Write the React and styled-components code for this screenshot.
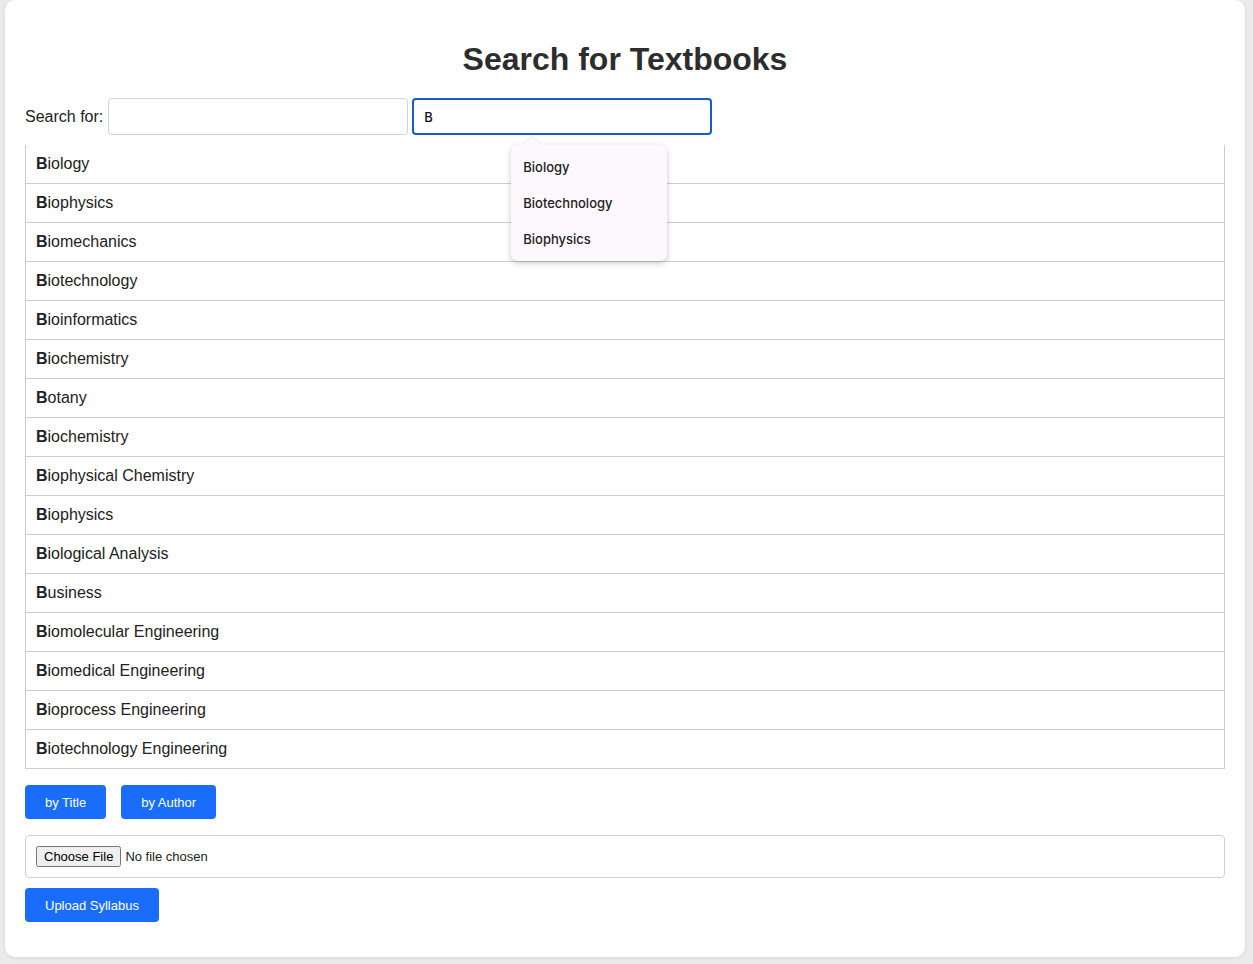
import React from "react";
import styled, { createGlobalStyle } from "styled-components";

const GlobalStyle = createGlobalStyle`
  html, body {
    margin: 0;
    background: #ebebeb;
    font-family: "Liberation Sans", Arial, sans-serif;
    color: #222;
  }
`;

const subjects = [
  "Biology",
  "Biophysics",
  "Biomechanics",
  "Biotechnology",
  "Bioinformatics",
  "Biochemistry",
  "Botany",
  "Biochemistry",
  "Biophysical Chemistry",
  "Biophysics",
  "Biological Analysis",
  "Business",
  "Biomolecular Engineering",
  "Biomedical Engineering",
  "Bioprocess Engineering",
  "Biotechnology Engineering",
];

const suggestions = ["Biology", "Biotechnology", "Biophysics"];

const App = () => {
  const query = "B";
  return (
    <Page>
      <GlobalStyle />
      <Card>
        <Title>Search for Textbooks</Title>
        <SearchRow>
          <Label>Search for:</Label>
          <TextInput type="text" />
          <InputWrap>
            <TextInput type="text" defaultValue={query} $focused />
            <Popover>
              {suggestions.map((s) => (
                <PopItem key={s}>{s}</PopItem>
              ))}
            </Popover>
          </InputWrap>
        </SearchRow>

        <ResultList>
          {subjects.map((s, i) => (
            <ResultRow key={i}>
              <b>{s.slice(0, query.length)}</b>
              {s.slice(query.length)}
            </ResultRow>
          ))}
        </ResultList>

        <ButtonRow>
          <Button>by Title</Button>
          <Button>by Author</Button>
        </ButtonRow>

        <FileBox>
          <input type="file" />
        </FileBox>

        <Button>Upload Syllabus</Button>
      </Card>
    </Page>
  );
};

const Page = styled.div`
  padding: 0 8px 7px 5px;
`;

const Card = styled.section`
  background: #fff;
  border-radius: 10px;
  box-shadow: 0 1px 4px rgba(0, 0, 0, 0.08);
  padding: 40px 20px 35px;
`;

const Title = styled.h1`
  margin: 0 0 20px;
  text-align: center;
  font-size: 32px;
  line-height: 38px;
  font-weight: bold;
  color: #2d2d2d;
`;

const SearchRow = styled.div`
  display: flex;
  align-items: center;
  gap: 4px;
  margin-bottom: 10px;
`;

const Label = styled.label`
  margin-right: 1px;
  font-size: 16px;
  color: #222;
`;

const InputWrap = styled.div`
  position: relative;
  display: flex;
`;

const TextInput = styled.input`
  box-sizing: border-box;
  width: 300px;
  height: 37px;
  border: ${({ $focused }) => ($focused ? "2px solid #1a5bc9" : "1px solid #cfd4da")};
  border-radius: 4px;
  padding: 0 ${({ $focused }) => ($focused ? "10px" : "11px")};
  font-family: "Inter", "Liberation Sans", sans-serif;
  font-size: 13px;
  font-weight: 500;
  color: #111;
  outline: none;
  background: #fff;
`;

const Popover = styled.div`
  position: absolute;
  top: 47px;
  left: 99px;
  width: 156px;
  padding: 4px 0;
  box-sizing: border-box;
  background: #fdf8fd;
  border-radius: 7px;
  box-shadow: 0 2px 6px rgba(0, 0, 0, 0.22);
  z-index: 5;

  &::before {
    content: "";
    position: absolute;
    top: -6px;
    left: 15px;
    width: 12px;
    height: 12px;
    background: #fdf8fd;
    transform: rotate(45deg);
    border-radius: 3px 0 0 0;
    box-shadow: -1px -1px 2px rgba(0, 0, 0, 0.08);
  }
`;

const PopItem = styled.div`
  position: relative;
  height: 36px;
  line-height: 36px;
  padding-left: 12px;
  font-family: "Inter", "Liberation Sans", sans-serif;
  font-size: 13px;
  font-weight: 500;
  color: #222;
`;

const ResultList = styled.ul`
  list-style: none;
  margin: 0;
  padding: 0;
  border-left: 1px solid #ccc;
  border-right: 1px solid #ccc;
`;

const ResultRow = styled.li`
  height: 38px;
  line-height: 38px;
  padding: 0 10px;
  border-bottom: 1px solid #ccc;
  font-size: 16px;
  color: #222;

  b {
    font-weight: bold;
  }
`;

const ButtonRow = styled.div`
  display: flex;
  gap: 15px;
  margin: 16px 0;
`;

const Button = styled.button`
  height: 34px;
  padding: 0 20px;
  border: none;
  border-radius: 4px;
  background: #1a6dfb;
  color: #fff;
  font-family: "Liberation Sans", Arial, sans-serif;
  font-size: 13px;
  font-weight: 500;
  cursor: pointer;
`;

const FileBox = styled.div`
  display: flex;
  align-items: center;
  box-sizing: border-box;
  height: 43px;
  padding: 0 10px;
  margin-bottom: 10px;
  border: 1px solid #cdd2d8;
  border-radius: 4px;

  input {
    font-family: "Liberation Sans", Arial, sans-serif;
    font-size: 13px;
  }
`;

export default App;
